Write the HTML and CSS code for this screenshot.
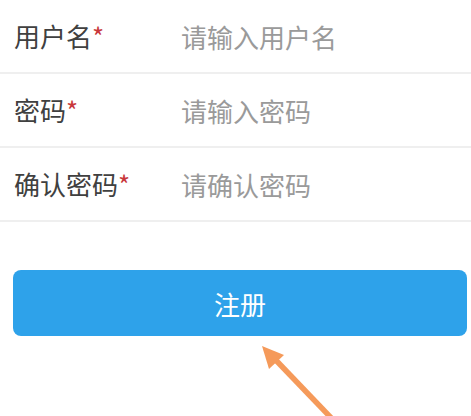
FILE: index.html
```html
<!DOCTYPE html>
<html lang="zh-CN">
<head>
  <meta charset="UTF-8">
  <title>注册</title>
  <link rel="stylesheet" href="styles.css">
</head>
<body>
  <form class="register-form">
    <div class="form-row">
      <label class="label">用户名<span class="req">*</span></label>
      <input class="field" type="text" placeholder="请输入用户名">
    </div>
    <div class="form-row">
      <label class="label">密码<span class="req">*</span></label>
      <input class="field" type="password" placeholder="请输入密码">
    </div>
    <div class="form-row">
      <label class="label">确认密码<span class="req">*</span></label>
      <input class="field" type="password" placeholder="请确认密码">
    </div>

    <div class="btn-wrap">
      <button class="submit-btn" type="button">注册</button>
    </div>
  </form>

  <!-- annotation arrow -->
  <svg class="hint-arrow" width="90" height="80" viewBox="0 0 90 80">
    <line x1="14" y1="13" x2="82" y2="84" stroke="#f59a5a" stroke-width="5.5"/>
    <polygon points="7,6 29,15 14,29" fill="#f59a5a"/>
  </svg>
</body>
</html>
```

FILE: styles.css
```css
body {
  margin: 0;
  background: #ffffff;
  font-family: "Noto Sans CJK SC", "Noto Sans", sans-serif;
  position: relative;
  height: 416px;
  overflow: hidden;
}

.register-form {
  border-top: 2px solid #f3f3f3;
  margin-top: -2px;
}

.form-row {
  display: flex;
  align-items: center;
  height: 72px;
  border-bottom: 2px solid #efefef;
  padding-left: 14px;
}

.label {
  width: 167px;
  font-size: 26px;
  color: #404040;
  line-height: 1;
}

.req {
  color: #c8373a;
}

.field {
  flex: 1;
  border: none;
  outline: none;
  padding: 0;
  font-family: inherit;
  font-size: 26px;
  color: #333;
  background: transparent;
}

.field::placeholder {
  color: #9a9a9a;
}

.btn-wrap {
  padding: 48px 4px 0 13px;
}

.submit-btn {
  display: block;
  width: 100%;
  height: 66px;
  border: none;
  border-radius: 8px;
  background: #2ea2ea;
  color: #ffffff;
  font-family: inherit;
  font-size: 26px;
  cursor: pointer;
}

.hint-arrow {
  position: absolute;
  left: 255px;
  top: 340px;
}
```
